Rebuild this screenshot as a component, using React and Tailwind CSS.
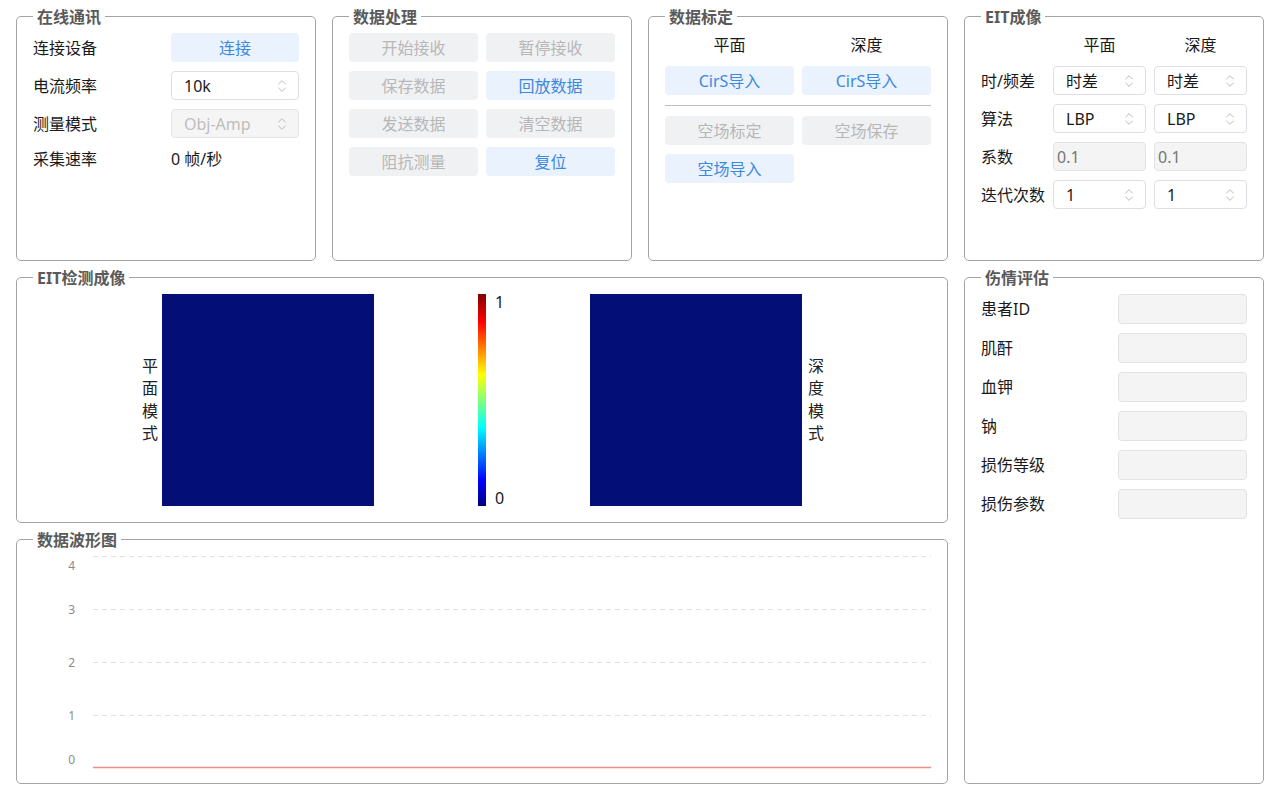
import React from 'react';
import { ChevronsUpDown } from 'lucide-react';

const Panel = ({ title, className = '', children }) => (
  <div className={`relative rounded-[5px] border border-[#a3a3a3] ${className}`}>
    <span className="absolute -top-[10px] left-[16px] bg-white px-1 text-base font-bold leading-5 text-[#5a5a5a]">
      {title}
    </span>
    <div className="h-full p-4">{children}</div>
  </div>
);

const Btn = ({ children, active }) => (
  <button
    className={
      active
        ? 'flex h-[29px] items-center justify-center rounded-[4px] bg-[#e9f2fd] text-base text-[#3d89e0]'
        : 'flex h-[29px] items-center justify-center rounded-[4px] bg-[#f0f1f3] text-base text-[#b7b7b7]'
    }
  >
    {children}
  </button>
);

const Select = ({ value, disabled }) => (
  <div
    className={
      disabled
        ? 'flex h-[29px] items-center justify-between rounded-[4px] border border-[#e4e4e4] bg-[#f5f5f5] pl-3 pr-[8px] text-base text-[#bdbdbd]'
        : 'flex h-[29px] items-center justify-between rounded-[4px] border border-[#dcdfe6] bg-white pl-3 pr-[8px] text-base text-[#1a1a1a]'
    }
  >
    <span>{value}</span>
    <ChevronsUpDown size={16} strokeWidth={1.2} className="text-[#a8a8a8]" />
  </div>
);

const Field = ({ value = '', h = 'h-[29px]' }) => (
  <div className={`flex ${h} items-center rounded-[4px] border border-[#e2e2e2] bg-[#f4f4f4] pl-[3px] text-base text-[#777]`}>
    {value}
  </div>
);

const VLabel = ({ text }) => (
  <div className="flex w-4 flex-col text-base leading-[22.5px] text-[#222]">
    {text.split('').map((c, i) => (
      <span key={i}>{c}</span>
    ))}
  </div>
);

const Chart = () => {
  const ticks = [
    { v: '4', y: 0, ly: 10 },
    { v: '3', y: 53, ly: 54 },
    { v: '2', y: 106, ly: 107 },
    { v: '1', y: 159, ly: 160 },
    { v: '0', y: 212, ly: 204 },
  ];
  return (
    <svg width={898} height={212} className="overflow-visible">
      {ticks.map((t) =>
        t.v === '0' ? null : (
          <line key={t.v} x1={60} x2={898} y1={t.y + 0.5} y2={t.y + 0.5} stroke="#e1e1e1" strokeDasharray="5 4" />
        )
      )}
      <line x1={60} x2={898} y1={211.5} y2={211.5} stroke="#f28b8b" strokeWidth={1.6} />
      {ticks.map((t) => (
        <text key={t.v} x={42} y={t.ly} dy="0.35em" textAnchor="end" fontSize={12} fill="#8c8c8c">
          {t.v}
        </text>
      ))}
    </svg>
  );
};

export default function App() {
  return (
    <div className="grid h-[800px] w-[1280px] grid-cols-4 grid-rows-3 gap-4 bg-white p-4 font-['Noto_Sans','Noto_Sans_CJK_SC',sans-serif] text-[#1a1a1a]">
      <Panel title="在线通讯">
        <div className="grid grid-cols-[1fr_128px] items-center gap-y-[9px] text-base">
          <span>连接设备</span>
          <Btn active>连接</Btn>
          <span>电流频率</span>
          <Select value="10k" />
          <span>测量模式</span>
          <Select value="Obj-Amp" disabled />
          <span className="flex h-6 items-center">采集速率</span>
          <span className="flex h-6 items-center">0 帧/秒</span>
        </div>
      </Panel>

      <Panel title="数据处理">
        <div className="grid grid-cols-2 gap-x-2 gap-y-[9px]">
          <Btn>开始接收</Btn>
          <Btn>暂停接收</Btn>
          <Btn>保存数据</Btn>
          <Btn active>回放数据</Btn>
          <Btn>发送数据</Btn>
          <Btn>清空数据</Btn>
          <Btn>阻抗测量</Btn>
          <Btn active>复位</Btn>
        </div>
      </Panel>

      <Panel title="数据标定">
        <div className="grid grid-cols-2 gap-x-2 gap-y-[9px]">
          <span className="flex h-6 items-center justify-center text-base">平面</span>
          <span className="flex h-6 items-center justify-center text-base">深度</span>
          <Btn active>CirS导入</Btn>
          <Btn active>CirS导入</Btn>
        </div>
        <div className="my-[10px] h-px bg-[#bdbdbd]" />
        <div className="grid grid-cols-2 gap-x-2 gap-y-[9px]">
          <Btn>空场标定</Btn>
          <Btn>空场保存</Btn>
          <Btn active>空场导入</Btn>
        </div>
      </Panel>

      <Panel title="EIT成像">
        <div className="grid grid-cols-[64px_1fr_1fr] items-center gap-x-2 gap-y-[9px] text-base">
          <span className="h-6" />
          <span className="flex h-6 items-center justify-center">平面</span>
          <span className="flex h-6 items-center justify-center">深度</span>
          <span>时/频差</span>
          <Select value="时差" />
          <Select value="时差" />
          <span>算法</span>
          <Select value="LBP" />
          <Select value="LBP" />
          <span>系数</span>
          <Field value="0.1" />
          <Field value="0.1" />
          <span>迭代次数</span>
          <Select value="1" />
          <Select value="1" />
        </div>
      </Panel>

      <Panel title="EIT检测成像" className="col-span-3">
        <div className="flex h-full items-center justify-center pl-[2px]">
          <VLabel text="平面模式" />
          <div className="ml-1 h-[212px] w-[212px] bg-[#030f77]" />
          <div className="ml-[104px] flex h-[212px] w-[112px]">
            <div className="h-full w-2 bg-[linear-gradient(to_top,#00007f_0%,#0000ff_12%,#00ffff_37%,#ffff00_62%,#ff0000_87%,#7f0000_100%)]" />
            <div className="ml-[9px] flex flex-col justify-between text-base leading-4 text-[#1a1a1a]">
              <span>1</span>
              <span>0</span>
            </div>
          </div>
          <div className="h-[212px] w-[212px] bg-[#030f77]" />
          <div className="ml-[6px]">
            <VLabel text="深度模式" />
          </div>
        </div>
      </Panel>

      <Panel title="伤情评估" className="col-start-4 row-span-2 row-start-2">
        <div className="grid grid-cols-2 items-center gap-x-2 gap-y-[9px] text-base">
          <span>患者ID</span>
          <Field h="h-[30px]" />
          <span>肌酐</span>
          <Field h="h-[30px]" />
          <span>血钾</span>
          <Field h="h-[30px]" />
          <span>钠</span>
          <Field h="h-[30px]" />
          <span>损伤等级</span>
          <Field h="h-[30px]" />
          <span>损伤参数</span>
          <Field h="h-[30px]" />
        </div>
      </Panel>

      <Panel title="数据波形图" className="col-span-3 row-start-3">
        <Chart />
      </Panel>
    </div>
  );
}
